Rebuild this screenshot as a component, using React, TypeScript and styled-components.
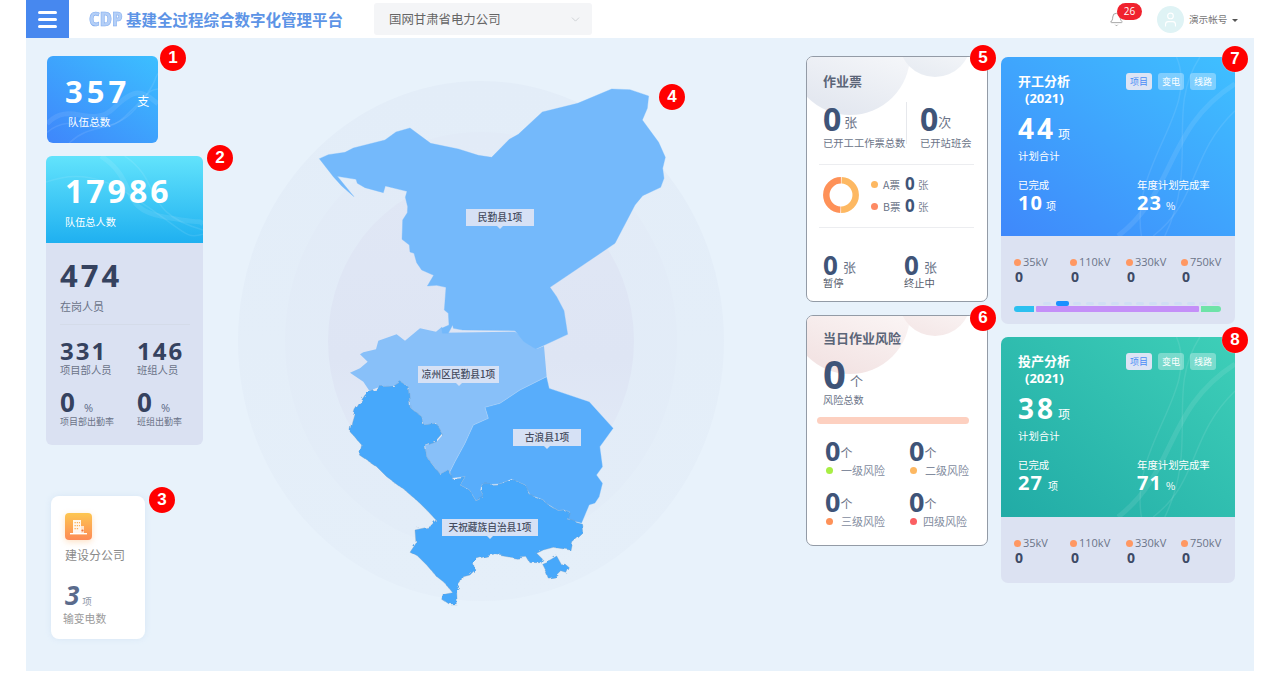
import React from 'react';
import styled, { createGlobalStyle } from 'styled-components';
import { ChevronDown, Bell, User } from 'lucide-react';

const CJK = `"Noto Sans CJK SC", "Noto Sans", sans-serif`;
const NUM = `"Open Sans", "Noto Sans", sans-serif`;

const Global = createGlobalStyle`
  html, body { margin: 0; background: #fff; height: 675px; overflow: hidden; }
  * { box-sizing: border-box; }
  body { font-family: ${CJK}; }
`;

const Page = styled.div`margin-left: 26px; width: 1228px; height: 671px; position: relative;`;

const Header = styled.header`display: flex; align-items: center; height: 38px; background: #fff;`;
const MenuButton = styled.button`
  width: 43px; height: 38px; border: 0; padding: 0; background: #4788ef;
  display: flex; flex-direction: column; align-items: center; justify-content: center; gap: 4px;
  span { display: block; width: 19px; height: 3px; background: #fff; border-radius: 2px; }
`;
const Logo = styled.span`
  margin-left: 20px; width: 37px; font: 800 18.5px/1 ${NUM}; color: #b4cff7; letter-spacing: 0;
  -webkit-text-stroke: 0.6px #7fabef; transform: scaleX(.9); transform-origin: left center;
`;
const Title = styled.h1`margin: 0; font: 700 15.5px/20px ${CJK}; color: #5d94e6; white-space: nowrap;`;
const Select = styled.div`
  margin-left: 31px; width: 218px; height: 32px; background: #f4f5f7; border-radius: 3px;
  display: flex; align-items: center; justify-content: space-between; padding: 0 10px 0 15px;
  font-size: 12.4px; color: #666;
`;
const HeaderRight = styled.div`margin-left: auto; display: flex; align-items: center; width: 145px; position: relative; height: 38px;`;
const BellWrap = styled.div`position: relative; width: 16px; height: 16px; margin-right: 32px; margin-top: 1px; color: #9a9a9a; svg { display: block; }`;
const BellBadge = styled.span`
  position: absolute; left: 8px; top: -9px; width: 25px; height: 17px; border-radius: 9px; background: #f0222e;
  color: #fff; font: 400 10px/17px ${NUM}; text-align: center;
`;
const Avatar = styled.div`width: 27px; height: 27px; border-radius: 50%; background: #dff3f5; color: #fff; display: flex; align-items: center; justify-content: center;`;
const Account = styled.span`margin-left: 5px; font-size: 9.6px; color: #777; white-space: nowrap;`;
const Caret = styled.span`margin-left: 5px; margin-top: 3px; width: 0; height: 0; border: 3px solid transparent; border-top: 3.5px solid #555; border-bottom: 0;`;

const Main = styled.main`height: 633px; background: #e8f2fb; display: flex; align-items: flex-start; padding-left: 20px;`;

const LeftCol = styled.div`width: 157px; padding-top: 18px; display: flex; flex-direction: column; align-items: flex-start;`;
const RightCol = styled.div<{ $w: number; $ml: number; $gap: number; $pt: number }>`
  width: ${p => p.$w}px; margin-left: ${p => p.$ml}px; padding-top: ${p => p.$pt}px;
  display: flex; flex-direction: column; gap: ${p => p.$gap}px;
`;

const Marker = styled.span<{ $x: number; $y: number }>`
  position: absolute; left: ${p => p.$x - 26 - 13}px; top: ${p => p.$y - 13}px; width: 26px; height: 26px; z-index: 5;
  border-radius: 50%; background: #ff0000; color: #fff; text-align: center; font: 700 17px/26px "Liberation Sans", sans-serif;
  box-shadow: 0 0 1px #fff;
`;

const Wave = styled.svg`position: absolute; inset: 0; width: 100%; height: 100%; pointer-events: none;`;
const Waves = ({ d }: { d: string[] }) => (
  <Wave preserveAspectRatio="none" viewBox="0 0 100 100">
    {d.map((p, i) => <path key={i} d={p} fill="none" stroke="#fff" strokeOpacity={0.09} strokeWidth={i === 0 ? 5 : 1.5} vectorEffect="non-scaling-stroke" />)}
  </Wave>
);

const TeamCard = styled.section`
  position: relative; overflow: hidden; margin-left: 1px; width: 111px; height: 87px; border-radius: 6px; color: #fff;
  background: linear-gradient(35deg, #3f86fb, #3cbfff); padding: 20px 0 0 18px;
`;
const NumRow = styled.div`display: flex; align-items: baseline;`;
const WhiteNum = styled.span<{ $s: number; $ls?: number }>`font: 700 ${p => p.$s}px/${p => p.$s}px ${NUM}; letter-spacing: ${p => p.$ls ?? 0}px;`;
const Unit = styled.span<{ $s?: number; $ml?: number; $dy?: number }>`
  font-size: ${p => p.$s ?? 12}px; margin-left: ${p => p.$ml ?? 4}px; line-height: 1; transform: translateY(${p => p.$dy ?? 0}px);
`;
const Caption = styled.div<{ $s?: number; $mt?: number; $ml?: number }>`
  font-size: ${p => p.$s ?? 11}px; line-height: 14px; margin-top: ${p => p.$mt ?? 0}px; margin-left: ${p => p.$ml ?? 0}px; white-space: nowrap;
`;

const PeopleCard = styled.section`margin-top: 13px; width: 157px; height: 289px; border-radius: 6px; overflow: hidden; background: #dae1f2;`;
const PeopleHead = styled.div`
  position: relative; height: 87px; color: #fff; padding: 19px 0 0 19px; background: linear-gradient(180deg, #62e3fc, #1fb0f0);
`;
const PeopleBody = styled.div`padding: 17px 0 0 14px; color: #3a4763;`;
const DarkNum = styled.div<{ $s: number; $ls?: number }>`font: 700 ${p => p.$s}px/${p => p.$s}px ${NUM}; letter-spacing: ${p => p.$ls ?? 0}px; color: #35425f;`;
const GreyText = styled.div<{ $s?: number; $mt?: number }>`font-size: ${p => p.$s ?? 10.3}px; line-height: 14px; color: #6a7388; margin-top: ${p => p.$mt ?? 0}px; white-space: nowrap;`;
const Rule = styled.hr`margin: 11px 13px 0 0; border: 0; border-top: 1px solid #d4dbe9;`;
const TwoCols = styled.div<{ $mt: number }>`display: grid; grid-template-columns: 77px 1fr; margin-top: ${p => p.$mt}px;`;
const SmallPct = styled.span`font: 400 11px/1 ${NUM}; color: #5d6a85; margin-left: 9px;`;
const InlineNum = styled.div`display: flex; align-items: baseline; height: 25px; font: 700 26px/25px ${NUM}; color: #35425f;`;

const CompanyCard = styled.section`
  margin: 51px 0 0 5px; width: 94px; height: 143px; border-radius: 8px; background: #fff; padding: 17px 0 0 14px;
  box-shadow: 0 0 6px rgba(190,215,240,.4);
`;
const CompanyIcon = styled.div`
  width: 27px; height: 27px; border-radius: 4px; background: linear-gradient(180deg, #fdc651, #fd8a56);
  box-shadow: 0 2px 6px rgba(253,170,90,.35); display: flex; align-items: center; justify-content: center;
`;
const CompanyName = styled.div`margin-top: 7px; font-size: 12px; line-height: 16px; color: #8a8a8a; white-space: nowrap;`;
const ItalicNum = styled.div`margin-top: 19px; height: 26px; display: flex; align-items: baseline; font: italic 700 26px/26px ${NUM}; color: #5a6b8c;`;
const SoftUnit = styled.span`font: normal 400 9.5px/1 ${CJK}; color: #8f98a8; margin-left: 3px;`;
const SoftCaption = styled.div`margin: 3px 0 0 -2px; font-size: 10.8px; line-height: 14px; color: #9a9a9a;`;

const MapArea = styled.div`position: relative; width: 603px; height: 633px; flex: none;`;
const MapSvg = styled.svg`display: block; width: 603px; height: 633px;`;
const Pin = styled.span<{ $x: number; $y: number; $w: number }>`
  position: absolute; left: ${p => p.$x - 203}px; top: ${p => p.$y - 38}px; width: ${p => p.$w}px; height: 17px;
  background: #d6e1f5; color: #454c5e; font-size: 9.7px; font-weight: 500; line-height: 17px; text-align: center; white-space: nowrap;
  &::after {
    content: ""; position: absolute; left: 50%; margin-left: -3px; top: 17px; border: 3px solid transparent; border-top-color: #d6e1f5; border-bottom: 0;
  }
`;

const WhitePanel = styled.section<{ $h: number }>`
  position: relative; overflow: hidden; width: 182px; height: ${p => p.$h}px; background: #fff; border: 1px solid #939ba6; border-radius: 7px;
  padding: 0 0 0 16px;
`;
const Bubble = styled.span<{ $tint: string; $x: number; $y: number; $r: number }>`
  position: absolute; left: ${p => p.$x - p.$r}px; top: ${p => p.$y - p.$r}px; width: ${p => p.$r * 2}px; height: ${p => p.$r * 2}px; border-radius: 50%;
  background: linear-gradient(20deg, ${p => p.$tint} 15%, #fff 90%);
`;
const PanelContent = styled.div`position: relative;`;
const PanelTitle = styled.h3<{ $mt: number }>`margin: ${p => p.$mt}px 0 0; font-size: 13px; line-height: 16px; font-weight: 700; color: #5b6578;`;
const PanelRow = styled.div<{ $mt: number }>`display: flex; margin-top: ${p => p.$mt}px;`;
const Stat = styled.div<{ $w: number }>`width: ${p => p.$w}px; flex: none;`;
const StatNum = styled.div<{ $s: number; $h?: number }>`
  display: flex; align-items: baseline; height: ${p => p.$h ?? p.$s}px; font: 700 ${p => p.$s}px/${p => p.$h ?? p.$s}px ${NUM}; color: #3f5478;
`;
const StatUnit = styled.span<{ $s?: number; $ml?: number; $up?: number }>`
  font: 400 ${p => p.$s ?? 13}px/1 ${CJK}; color: #6b7488; margin-left: ${p => p.$ml ?? 1}px; transform: translateY(-${p => p.$up ?? 0}px);
`;
const StatLabel = styled.div<{ $s?: number; $c?: string; $mt?: number }>`
  font-size: ${p => p.$s ?? 10.3}px; line-height: 14px; color: ${p => p.$c ?? '#6b7488'}; white-space: nowrap; margin-top: ${p => p.$mt ?? 0}px;
`;
const VLine = styled.span`width: 1px; height: 42px; margin: 0 13px 0 -1px; background: #e6e8ec; align-self: flex-start; flex: none;`;
const PanelRule = styled.hr<{ $mt: number }>`margin: ${p => p.$mt}px 13px 0 -4px; border: 0; border-top: 1px solid #ecedf0;`;
const DonutRow = styled.div`height: 62px; display: flex; align-items: center; svg { display: block; margin-top: -2px; }`;
const Legend = styled.div`margin-left: 12px; margin-top: -2px; display: flex; flex-direction: column; gap: 4px;`;
const LegendRow = styled.div`display: flex; align-items: center; height: 18px;`;
const Dot = styled.i<{ $c: string; $s?: number }>`display: block; flex: none; width: ${p => p.$s ?? 7}px; height: ${p => p.$s ?? 7}px; border-radius: 50%; background: ${p => p.$c};`;
const LegendName = styled.span`margin-left: 5px; width: 22px; font-size: 10.5px; color: #6b7488;`;
const LegendNum = styled.span`font: 700 17px/18px ${NUM}; color: #3f5478; width: 13px;`;
const LegendUnit = styled.span`font-size: 10.5px; color: #7b8496;`;
const RiskBar = styled.div`margin: 10px 18px 0 -6px; height: 7px; border-radius: 4px; background: #fdd0c0;`;
const RiskGrid = styled.div`margin: 14px 0 0 2px; display: grid; grid-template-columns: 84px 70px; row-gap: 12px;`;
const RiskLabel = styled.div<{ $gap: number }>`display: flex; align-items: center; height: 14px; margin-top: -1px; padding-left: 1px; font-size: 11px; color: #838c9e; white-space: nowrap; gap: ${p => p.$gap}px;`;

const AnalysisCard = styled.section<{ $h: number }>`width: 234px; height: ${p => p.$h}px; border-radius: 7px; overflow: hidden; background: #dce2f2; position: relative;`;
const AnalysisHead = styled.div<{ $h: number; $bg: string }>`
  position: relative; height: ${p => p.$h}px; padding: 16px 0 0 17px; color: #fff; background: ${p => p.$bg};
`;
const TitleBlock = styled.div`font-size: 13px; font-weight: 700; line-height: 16px;`;
const YearLine = styled.div`margin: 1px 0 0 7px; font: 700 13px/16px ${NUM};`;
const Tabs = styled.div`position: absolute; left: 125px; top: 16px; display: flex; gap: 6px;`;
const Tab = styled.span<{ $active?: boolean; $color: string }>`
  width: 26px; height: 17px; border-radius: 3px; font-size: 9px; line-height: 17px; text-align: center;
  background: ${p => p.$active ? '#dce4f5' : 'rgba(255,255,255,.33)'}; color: ${p => p.$active ? p.$color : '#fff'};
`;
const MainFigure = styled.div`display: flex; align-items: baseline; margin-top: 8px; height: 28px;`;
const HeadLabels = styled.div`display: grid; grid-template-columns: 119px 1fr; margin-top: 15px; font-size: 10.4px; line-height: 14px;`;
const HeadValues = styled.div`display: grid; grid-template-columns: 119px 1fr; margin-top: 1px;`;
const AnalysisBody = styled.div`position: relative; padding: 19px 0 0 13px;`;
const VoltRow = styled.div`display: grid; grid-template-columns: 56px 56px 55px 1fr;`;
const VoltName = styled.div`display: flex; align-items: center; gap: 2px; height: 14px; font: 400 11px/14px ${NUM}; color: #6b7488;`;
const VoltValue = styled.div`font: 700 14px/16px ${NUM}; color: #3d4a66; margin-left: 1px;`;
const StackBar = styled.div`position: relative; display: flex; gap: 2px; margin: 21px 0 0 0; width: 207px; height: 6px;`;
const Seg = styled.span<{ $w: number; $c: string }>`width: ${p => p.$w}px; background: ${p => p.$c}; border-radius: 1px;
  &:first-of-type { border-radius: 3px 0 0 3px; } &:last-of-type { border-radius: 0 3px 3px 0; }`;
const Ticks = styled.div`position: absolute; left: 29px; top: -4px; display: flex; gap: 4.6px;`;
const Tick = styled.span<{ $on?: boolean }>`
  width: ${p => p.$on ? 13 : 8}px; height: ${p => p.$on ? 5 : 3}px; margin-top: ${p => p.$on ? -1 : 0}px; border-radius: 2px; background: ${p => p.$on ? '#1a90ff' : '#d0def4'};
`;

const minqin = "58,236 85,224 135,217 160,204 255,180 288,156 330,144 392,190 475,207 535,226 575,232 628,178 655,163 727,96 833,70 935,27 990,29 1046,48 1042,85 1027,120 1076,187 1096,232 1088,265 1092,295 1082,322 1028,347 1005,375 945,490 750,622 770,650 792,692 803,763 708,807 672,785 645,752 488,750 460,745 458,735 445,760 427,760 425,745 447,735 445,700 433,690 438,622 410,616 382,618 401,586 365,570 350,548 342,520 330,516 328,495 306,478 308,420 322,398 323,380 316,352 321,334 256,318 250,338 195,323 172,310 168,298 112,289 162,350 125,318 100,290";
const liangzhou = "60,158 90,145 113,125 90,103 100,97 138,88 145,62 200,43 225,62 270,25 318,35 336,20 340,38 555,35 620,87 642,78 650,170 570,210 510,250 465,262 475,295 430,315 405,370 375,425 360,455 350,452 330,463 290,410 285,375 320,365 338,345 318,310 280,315 275,290 240,262 235,200 212,185 190,198 150,200 118,212 100,185";
const gulang = "650,170 658,205 778,245 850,325 810,380 818,440 800,465 818,490 808,530 795,550 778,555 755,610 712,598 718,575 700,570 685,572 648,550 640,540 600,525 585,495 545,478 510,492 455,495 452,510 462,530 438,543 418,510 390,495 405,470 365,475 360,455 375,425 405,370 430,315 475,295 465,262 510,250 570,210";
const tianzhu = "60,330 65,305 75,270 105,225 120,212 150,200 190,198 212,185 235,200 240,262 275,290 280,315 318,310 338,345 320,365 285,378 290,410 330,463 350,452 360,455 365,475 405,470 390,495 418,510 438,543 462,530 452,510 455,495 510,492 545,478 585,495 600,525 640,540 648,550 685,572 700,570 718,575 712,598 755,610 758,635 725,665 720,690 670,682 640,690 620,700 635,715 630,728 600,728 590,712 560,715 490,703 440,717 430,730 435,750 420,765 400,770 395,790 380,810 382,855 360,855 335,838 340,820 365,815 345,790 320,770 290,735 265,710 240,697 258,670 255,630 300,620 318,600 290,570 265,545 228,513 170,470 140,440 88,405 95,375 60,335";
const island = "635,730 660,720 680,708 695,735 705,732 718,743 710,760 695,755 680,770 655,775 645,750";

const waveA = ["M0 78 C20 50 40 85 60 60 S85 40 100 55", "M0 88 C25 60 45 100 70 70 S90 40 100 38", "M20 100 C40 75 60 90 80 60 S95 30 100 20"];
const waveB = ["M35 0 C60 30 45 60 75 70 S95 72 100 78", "M50 0 C75 30 60 65 100 85", "M0 30 C30 10 50 40 70 65 S90 95 100 90"];
const waveC = ["M100 15 C70 40 75 75 50 100", "M75 0 C85 30 55 60 60 100", "M100 30 C80 55 85 80 65 100", "M85 0 C70 30 85 60 70 100"];

function Analysis({ title, h, headH, bg, tabColor, total, done, doneGap, rate, bar }: {
  title: string; h: number; headH: number; bg: string; tabColor: string; total: string; done: string; doneGap: number; rate: string; bar?: boolean;
}) {
  return (
    <AnalysisCard $h={h}>
      <AnalysisHead $h={headH} $bg={bg}>
        <Waves d={waveC} />
        <TitleBlock>{title}</TitleBlock>
        <YearLine>(2021)</YearLine>
        <Tabs>
          <Tab $active $color={tabColor}>项目</Tab>
          <Tab $color={tabColor}>变电</Tab>
          <Tab $color={tabColor}>线路</Tab>
        </Tabs>
        <MainFigure>
          <WhiteNum $s={28} $ls={3}>{total}</WhiteNum>
          <Unit $s={12} $ml={2}>项</Unit>
        </MainFigure>
        <Caption $s={10.4} $mt={7}>计划合计</Caption>
        <HeadLabels><span>已完成</span><span>年度计划完成率</span></HeadLabels>
        <HeadValues>
          <NumRow><WhiteNum $s={20} $ls={1}>{done}</WhiteNum><Unit $s={10} $ml={doneGap}>项</Unit></NumRow>
          <NumRow><WhiteNum $s={20} $ls={1}>{rate}</WhiteNum><Unit $s={10} $ml={4}>%</Unit></NumRow>
        </HeadValues>
      </AnalysisHead>
      <AnalysisBody>
        <VoltRow>
          {['35kV', '110kV', '330kV', '750kV'].map(k => (
            <div key={k}>
              <VoltName><Dot $c="#ff9863" />{k}</VoltName>
              <VoltValue>0</VoltValue>
            </div>
          ))}
        </VoltRow>
        {bar && (
          <StackBar>
            <Ticks>{Array.from({ length: 14 }, (_, i) => <Tick key={i} $on={i === 1} />)}</Ticks>
            <Seg $w={20} $c="#2cc0f0" />
            <Seg $w={163} $c="#c48ff8" />
            <Seg $w={20} $c="#6ee3a8" />
          </StackBar>
        )}
      </AnalysisBody>
    </AnalysisCard>
  );
}

const Risk = ({ c, label, gap }: { c: string; label: string; gap: number }) => (
  <div>
    <StatNum $s={27} $h={26}>0<StatUnit $s={12} $ml={0} $up={3}>个</StatUnit></StatNum>
    <RiskLabel $gap={gap}><Dot $c={c} />{label}</RiskLabel>
  </div>
);

export default function App() {
  return (
    <Page>
      <Global />
      <Header>
        <MenuButton aria-label="menu"><span /><span /><span /></MenuButton>
        <Logo>CDP</Logo>
        <Title>基建全过程综合数字化管理平台</Title>
        <Select>国网甘肃省电力公司<ChevronDown size={13} color="#c4c7cc" strokeWidth={1.4} /></Select>
        <HeaderRight>
          <BellWrap><Bell size={15} strokeWidth={1.4} /><BellBadge>26</BellBadge></BellWrap>
          <Avatar><User size={17} strokeWidth={1.6} /></Avatar>
          <Account>演示帐号</Account>
          <Caret />
        </HeaderRight>
      </Header>

      <Main>
        <LeftCol>
          <TeamCard>
            <Waves d={waveA} />
            <NumRow><WhiteNum $s={31} $ls={4}>357</WhiteNum><Unit $s={12} $ml={7} $dy={3}>支</Unit></NumRow>
            <Caption $mt={8} $ml={3} $s={10.6}>队伍总数</Caption>
          </TeamCard>
          <PeopleCard>
            <PeopleHead>
              <Waves d={waveB} />
              <WhiteNum $s={32} $ls={3}>17986</WhiteNum>
              <Caption $mt={7} $s={10.2}>队伍总人数</Caption>
            </PeopleHead>
            <PeopleBody>
              <DarkNum $s={31} $ls={3}>474</DarkNum>
              <GreyText $s={11} $mt={8}>在岗人员</GreyText>
              <Rule />
              <TwoCols $mt={14}>
                <div><DarkNum $s={24} $ls={2}>331</DarkNum><GreyText>项目部人员</GreyText></div>
                <div><DarkNum $s={24} $ls={2}>146</DarkNum><GreyText>班组人员</GreyText></div>
              </TwoCols>
              <TwoCols $mt={13}>
                <div><InlineNum>0<SmallPct>%</SmallPct></InlineNum><GreyText $s={9}>项目部出勤率</GreyText></div>
                <div><InlineNum>0<SmallPct>%</SmallPct></InlineNum><GreyText $s={9}>班组出勤率</GreyText></div>
              </TwoCols>
            </PeopleBody>
          </PeopleCard>
          <CompanyCard>
            <CompanyIcon>
              <svg width="19" height="19" viewBox="0 0 19 19">
                <path d="M4 3h8v13H4z" fill="#fff" fillOpacity=".9" />
                <path d="M12 9h3v7h-3z" fill="#fff" fillOpacity=".7" />
                <path d="M1 16h17v1.4H1z" fill="#fff" />
                <path d="M5.5 5h1.3v1.3H5.5zM7.8 5h1.3v1.3H7.8zM10 5h1v1.3h-1zM5.5 8h1.3v1.3H5.5zM7.8 8h1.3v1.3H7.8zM10 8h1v1.3h-1zM5.5 11h1.3v1.3H5.5zM7.8 11h1.3v1.3H7.8z" fill="#fdb056" />
                <circle cx="13.5" cy="13.5" r="1.1" fill="#f0703a" />
              </svg>
            </CompanyIcon>
            <CompanyName>建设分公司</CompanyName>
            <ItalicNum>3<SoftUnit>项</SoftUnit></ItalicNum>
            <SoftCaption>输变电数</SoftCaption>
          </CompanyCard>
        </LeftCol>

        <MapArea>
          <MapSvg viewBox="203 38 603 633">
            <defs>
              <linearGradient id="ringA" x1="0" y1="0" x2="0" y2="1">
                <stop offset="0" stopColor="#e3edf8" /><stop offset="1" stopColor="#e5eff9" />
              </linearGradient>
              <linearGradient id="ringB" x1="0" y1="0" x2="0" y2="1">
                <stop offset="0" stopColor="#e2ebf7" /><stop offset="1" stopColor="#e3edf8" />
              </linearGradient>
              <linearGradient id="ringC" x1="0" y1="0" x2="0" y2="1">
                <stop offset="0" stopColor="#e0e7f5" /><stop offset=".55" stopColor="#dee5f4" /><stop offset="1" stopColor="#e3ecf8" />
              </linearGradient>
              <filter id="rough" x="-5%" y="-5%" width="110%" height="110%">
                <feTurbulence type="fractalNoise" baseFrequency="0.035" numOctaves="3" seed="4" />
                <feDisplacementMap in="SourceGraphic" scale="16" />
              </filter>
            </defs>
            <ellipse cx="481" cy="341" rx="243" ry="260" fill="url(#ringA)" />
            <ellipse cx="481" cy="341" rx="196" ry="209" fill="url(#ringB)" />
            <ellipse cx="481" cy="341" rx="153" ry="164" fill="url(#ringC)" />
            <g transform="translate(330 320) scale(.33333)">
              <polygon points={liangzhou} fill="#88c0f9" />
            </g>
            <g transform="translate(300 80) scale(.33333)">
              <polygon points={minqin} fill="#74b9fb" stroke="#74b9fb" strokeWidth="1" />
            </g>
            <g transform="translate(330 320) scale(.33333)">
              <polygon points={gulang} fill="#58adfb" stroke="#cfe3f8" strokeWidth="1" />
              <g filter="url(#rough)">
                <polygon points={tianzhu} fill="#47a8fb" stroke="#7f9dbd" strokeWidth="1" />
                <polygon points={island} fill="#47a8fb" stroke="#7f9dbd" strokeWidth="1" />
              </g>
            </g>
          </MapSvg>
          <Pin $x={466} $y={209} $w={68}>民勤县1项</Pin>
          <Pin $x={418} $y={366} $w={81}>凉州区民勤县1项</Pin>
          <Pin $x={513} $y={429} $w={68}>古浪县1项</Pin>
          <Pin $x={442} $y={519} $w={96}>天祝藏族自治县1项</Pin>
        </MapArea>

        <RightCol $w={182} $ml={0} $gap={13} $pt={18}>
          <WhitePanel $h={246}>
            <Bubble $tint="#e4e8f0" $x={43} $y={-2} $r={60} />
            <Bubble $tint="#e9edf3" $x={128} $y={-16} $r={36} />
            <PanelContent>
              <PanelTitle $mt={16}>作业票</PanelTitle>
              <PanelRow $mt={13}>
                <Stat $w={84}>
                  <StatNum $s={32} $h={34}>0<StatUnit $ml={3} $up={4}>张</StatUnit></StatNum>
                  <StatLabel>已开工工作票总数</StatLabel>
                </Stat>
                <VLine />
                <Stat $w={60}>
                  <StatNum $s={32} $h={34}>0<StatUnit $ml={0} $up={4}>次</StatUnit></StatNum>
                  <StatLabel>已开站班会</StatLabel>
                </Stat>
              </PanelRow>
              <PanelRule $mt={14} />
              <DonutRow>
                <svg width="36" height="36" viewBox="0 0 36 36">
                  <circle cx="18" cy="18" r="14.7" fill="none" stroke="#fdb862" strokeWidth="6.5" strokeDasharray="45.2 47.2" strokeDashoffset="-0.6" transform="rotate(-90 18 18)" />
                  <circle cx="18" cy="18" r="14.7" fill="none" stroke="#fe9158" strokeWidth="6.5" strokeDasharray="45.2 47.2" strokeDashoffset="-0.6" transform="rotate(90 18 18)" />
                </svg>
                <Legend>
                  <LegendRow><Dot $c="#fdb862" /><LegendName>A票</LegendName><LegendNum>0</LegendNum><LegendUnit>张</LegendUnit></LegendRow>
                  <LegendRow><Dot $c="#fd8a63" /><LegendName>B票</LegendName><LegendNum>0</LegendNum><LegendUnit>张</LegendUnit></LegendRow>
                </Legend>
              </DonutRow>
              <PanelRule $mt={0} />
              <PanelRow $mt={24}>
                <Stat $w={81}>
                  <StatNum $s={26}>0<StatUnit $ml={5} $up={3}>张</StatUnit></StatNum>
                  <StatLabel $c="#555c6b" $mt={-2}>暂停</StatLabel>
                </Stat>
                <Stat $w={70}>
                  <StatNum $s={26}>0<StatUnit $ml={5} $up={3}>张</StatUnit></StatNum>
                  <StatLabel $c="#555c6b" $mt={-2}>终止中</StatLabel>
                </Stat>
              </PanelRow>
            </PanelContent>
          </WhitePanel>
          <WhitePanel $h={231}>
            <Bubble $tint="#f3e4e4" $x={43} $y={-2} $r={60} />
            <Bubble $tint="#f5e9e9" $x={128} $y={-16} $r={36} />
            <PanelContent>
              <PanelTitle $mt={14}>当日作业风险</PanelTitle>
              <PanelRow $mt={6}>
                <StatNum $s={40} $h={44}>0<StatUnit $ml={4} $up={3}>个</StatUnit></StatNum>
              </PanelRow>
              <StatLabel $s={10.2} $mt={-3}>风险总数</StatLabel>
              <RiskBar />
              <RiskGrid>
                <Risk c="#a8ee44" label="一级风险" gap={8} />
                <Risk c="#fdb862" label="二级风险" gap={8} />
                <Risk c="#fe9158" label="三级风险" gap={8} />
                <Risk c="#fb5f62" label="四级风险" gap={6} />
              </RiskGrid>
            </PanelContent>
          </WhitePanel>
        </RightCol>

        <RightCol $w={234} $ml={13} $gap={13} $pt={19}>
          <Analysis title="开工分析" h={267} headH={179} bg="linear-gradient(35deg, #3f88fb, #3fc0ff)" tabColor="#4a8cf5" total="44" done="10" doneGap={3} rate="23" bar />
          <Analysis title="投产分析" h={246} headH={180} bg="linear-gradient(40deg, #21aba6, #3ecfb8)" tabColor="#4a8cf5" total="38" done="27" doneGap={5} rate="71" />
        </RightCol>
      </Main>

      <Marker $x={173} $y={58}>1</Marker>
      <Marker $x={220} $y={158}>2</Marker>
      <Marker $x={162} $y={500}>3</Marker>
      <Marker $x={672} $y={97}>4</Marker>
      <Marker $x={983} $y={58}>5</Marker>
      <Marker $x={983} $y={318}>6</Marker>
      <Marker $x={1235} $y={59}>7</Marker>
      <Marker $x={1235} $y={340}>8</Marker>
    </Page>
  );
}
